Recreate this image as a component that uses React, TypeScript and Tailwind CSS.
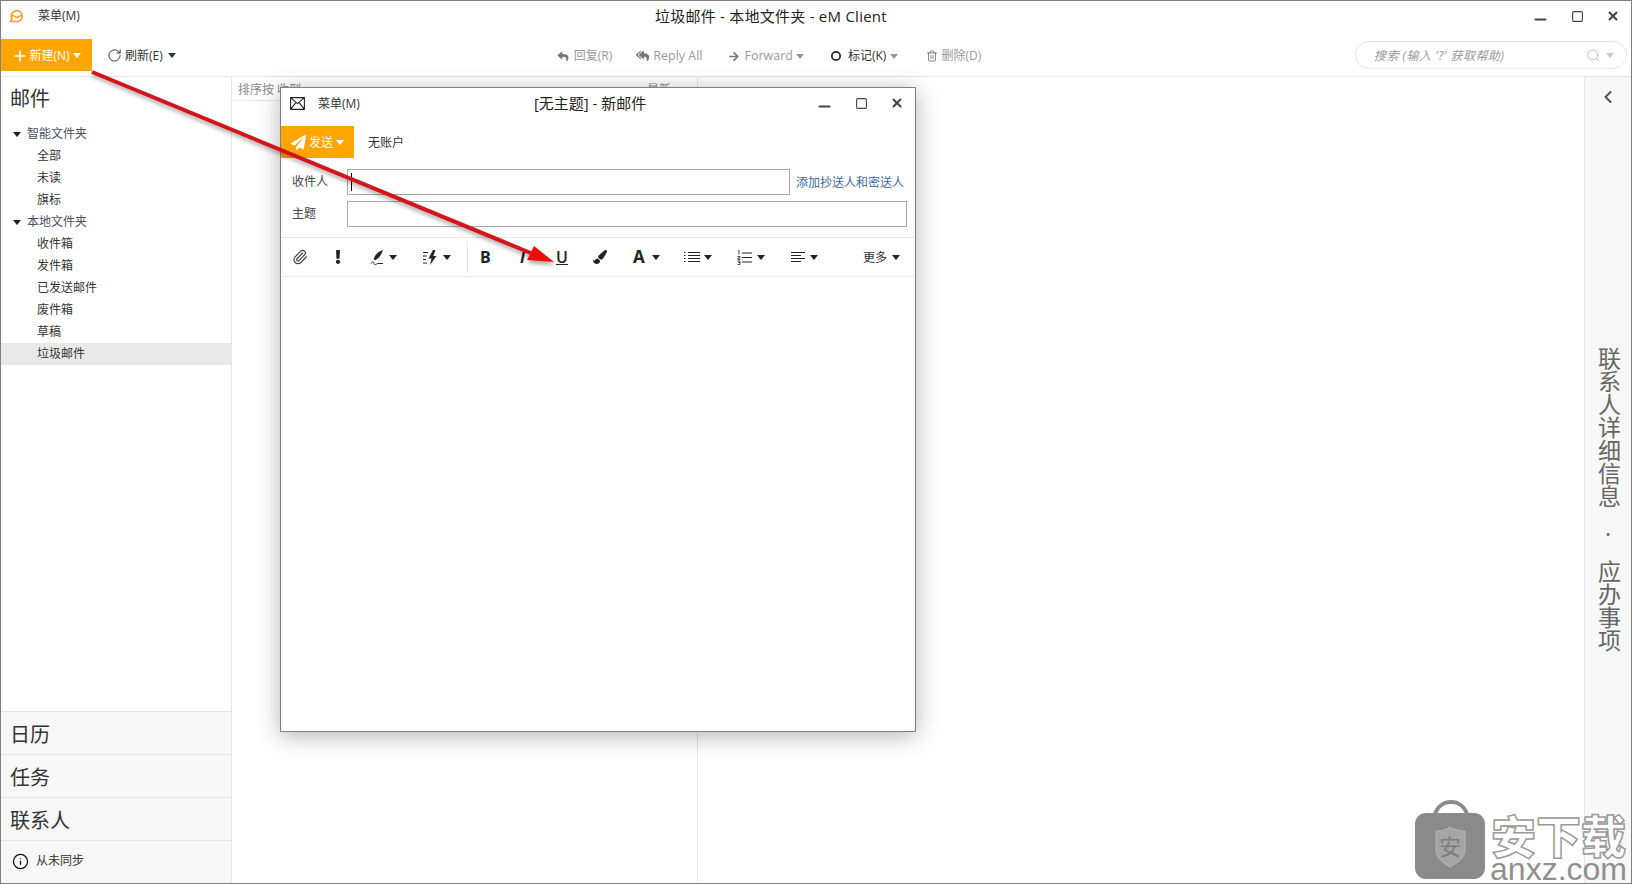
import { FaArrowRight, FaExclamation, FaPaintBrush, FaPaperPlane, FaReply, FaReplyAll } from "react-icons/fa"
import { Paperclip, Search, Trash2, ChevronLeft, Plus, RotateCw, X, Minus, Square, Info, Circle } from "lucide-react"

function Caret({ className = "text-[#222]" }: { className?: string }) {
  return (
    <svg width="8" height="5" viewBox="0 0 8 5" className={`flex-none ${className}`}>
      <path d="M0 0h8L4 5z" fill="currentColor" />
    </svg>
  )
}

function WindowButtons() {
  return (
    <div className="flex items-center gap-[22px] text-[#444]">
      <Minus className="h-[17px] w-[17px] translate-y-[3px]" strokeWidth={3} />
      <Square className="h-[13px] w-[13px]" strokeWidth={2} />
      <X className="h-[14px] w-[14px]" strokeWidth={3.5} />
    </div>
  )
}

function TreeHeader({ label }: { label: string }) {
  return (
    <div className="flex h-[22px] items-center pl-[12px] text-[#4a5260]">
      <Caret />
      <span className="ml-[6px]">{label}</span>
    </div>
  )
}

function TreeItem({ label, active }: { label: string; active?: boolean }) {
  return (
    <div className={`flex h-[22px] items-center pl-[36px] text-[#333] ${active ? "bg-[#e9e9e9]" : ""}`}>{label}</div>
  )
}

function BottomNav({ label }: { label: string }) {
  return (
    <div className="flex h-[43px] items-center border-t border-[#e6e6e6] pl-[9px] pt-[3px] text-[20px] text-[#333]">
      {label}
    </div>
  )
}

function PenIcon() {
  return (
    <svg width="14" height="16" viewBox="0 0 14 16" className="ml-[25px] flex-none">
      <path d="M13 1C9.5 2 6 4.5 4.5 8L3.5 10.5 5.5 11C8.5 9.5 11.5 6 13 1z" fill="#222" />
      <path d="M1 14.5c1.5-2 2.5-2 3 0s2 1 3.5 0H13" fill="none" stroke="#222" strokeWidth="1" />
    </svg>
  )
}

function QuickIcon() {
  return (
    <svg width="15" height="15" viewBox="0 0 15 15" className="ml-[26px] flex-none">
      <path d="M0 2.5h5M0 6h4M0 9.5h3M0 13h4" stroke="#222" strokeWidth="1" />
      <path d="M10 0L5.5 8.5h3L7 15l6.5-9h-3.2L12.5 0z" fill="#222" />
    </svg>
  )
}

function BulletIcon() {
  return (
    <svg width="16" height="12" viewBox="0 0 16 12" className="ml-[24px] flex-none">
      <path d="M4 1.5h12M4 4.5h12M4 7.5h12M4 10.5h12" stroke="#222" strokeWidth="1" />
      <path d="M0 1h1.5v1H0zM0 4h1.5v1H0zM0 7h1.5v1H0zM0 10h1.5v1H0z" fill="#222" />
    </svg>
  )
}

function NumberIcon() {
  return (
    <svg width="15" height="15" viewBox="0 0 15 15" className="ml-[25px] flex-none">
      <path d="M5 3h10M5 7.5h10M5 12h10" stroke="#222" strokeWidth="1" />
      <path d="M1 1l1-.5v4M.5 6.5h2.5v1.5H.8v1.5h2.500M.5 11h2.500v1.500H1.500M1.500 12.500H3V14.500H.5" fill="none" stroke="#222" strokeWidth="0.8" />
    </svg>
  )
}

function AlignIcon() {
  return (
    <svg width="16" height="12" viewBox="0 0 16 12" className="ml-[25px] flex-none">
      <path d="M1 1.500h14M1 4.500h10M1 7.500h14M1 10.500h10" stroke="#222" strokeWidth="1" />
    </svg>
  )
}

function ComposeWindow() {
  return (
    <div className="absolute left-[279px] top-[86px] flex h-[645px] w-[636px] flex-col border border-[#808080] bg-white text-[12px] shadow-[0_4px_22px_rgba(0,0,0,0.3)]">
      <div className="flex h-[38px] flex-none items-center pb-[8px] pl-[9px] pr-[11px]">
        <svg width="15" height="13" viewBox="0 0 15 13" className="flex-none">
          <path d="M.6.6h13.800v11.800H.6zM.6.6l6.900 6 6.900-6M.6 12.400l5.400-7M14.400 12.400l-5.400-7" fill="none" stroke="#222" strokeWidth="1.100" />
        </svg>
        <span className="ml-[13px] translate-y-px text-[#333]">菜单(M)</span>
        <span className="ml-[174px] text-[15px] text-[#222]">[无主题] - 新邮件</span>
        <div className="ml-auto">
          <WindowButtons />
        </div>
      </div>
      <div className="flex h-[32px] flex-none items-center">
        <button className="flex h-[32px] w-[73px] items-center justify-center gap-[3px] bg-[#ffa500] pt-[1px] text-white">
          <FaPaperPlane className="h-[15px] w-[15px]" />
          <span>发送</span>
          <Caret className="text-white" />
        </button>
        <span className="ml-[14px] pt-[2px] text-[#333]">无账户</span>
      </div>
      <div className="mt-[11px] flex h-[26px] flex-none items-center pl-[11px]">
        <span className="w-[55px] text-[#444]">收件人</span>
        <div className="flex h-[26px] w-[443px] items-center border border-[#a9a9a9] pl-[3px]">
          <div className="h-[18px] w-px bg-black" />
        </div>
        <a className="ml-[6px] pt-[2px] text-[#3c6a9c]">添加抄送人和密送人</a>
      </div>
      <div className="mt-[6px] flex h-[26px] flex-none items-center pl-[11px]">
        <span className="w-[55px] text-[#444]">主题</span>
        <div className="h-[26px] w-[560px] border border-[#a9a9a9]" />
      </div>
      <div className="mt-[10px] flex h-[40px] flex-none items-center border-y border-[#e6e6e6] text-[#222]">
        <Paperclip className="ml-[11px] h-[16px] w-[16px] text-[#444]" strokeWidth={1.8} />
        <FaExclamation className="ml-[23px] h-[14px] w-[14px]" />
        <PenIcon />
        <Caret className="ml-[5px]" />
        <QuickIcon />
        <Caret className="ml-[5px]" />
        <div className="ml-[16px] h-[32px] w-px bg-[#e6e6e6]" />
        <span className="ml-[12px] w-[10px] font-['Open_Sans'] text-[16px] font-bold">B</span>
        <span className="ml-[30px] w-[6px] font-['Open_Sans'] text-[16px] font-bold italic">I</span>
        <span className="ml-[30px] w-[12px] font-['Open_Sans'] text-[16px] font-semibold underline">U</span>
        <FaPaintBrush className="ml-[25px] h-[14px] w-[14px]" />
        <span className="ml-[26px] w-[12px] font-['Open_Sans'] text-[17px] font-bold">A</span>
        <Caret className="ml-[7px]" />
        <BulletIcon />
        <Caret className="ml-[4px]" />
        <NumberIcon />
        <Caret className="ml-[5px]" />
        <AlignIcon />
        <Caret className="ml-[4px]" />
        <span className="ml-[45px] pt-[1px] text-[#333]">更多</span>
        <Caret className="ml-[5px]" />
      </div>
      <div className="flex-1" />
    </div>
  )
}

function Watermark() {
  return (
    <div className="absolute left-[1414px] top-[798px] flex items-start">
      <svg width="72" height="81" viewBox="0 0 72 81">
        <path d="M19 18C22 6 30 3 36 3s14 3 17 15" fill="none" stroke="#8a8a8a" strokeWidth="4" />
        <rect x="0" y="14" width="70" height="66" rx="11" fill="#8a8a8a" />
        <path d="M21 32c7 0 11-2 14-4 3 2 8 4 15 4v19c0 8-8 13-15 17-7-4-14-9-14-17z" fill="#a5a5a5" stroke="#b5b5b5" />
        <text x="35" y="56" textAnchor="middle" fontSize="22" fill="#7d7d7d" fontFamily="'Noto Sans CJK SC', sans-serif">安</text>
      </svg>
      <div className="ml-[3px] mt-[16px] flex w-[137px] flex-col items-center">
        <span className="font-['Noto_Sans_CJK_SC',sans-serif] text-[45px] font-black leading-[40px] text-white [-webkit-text-stroke:1.5px_#9a9a9a]">安下载</span>
        <span className="font-['Liberation_Sans',sans-serif] text-[32px] leading-[28px] text-[#8f8f8f]">anxz.com</span>
      </div>
    </div>
  )
}

function Arrow() {
  return (
    <svg width="1632" height="884" className="pointer-events-none absolute -left-px -top-px">
      <defs>
        <filter id="arrowShadow" x="-10%" y="-10%" width="120%" height="130%">
          <feDropShadow dx="1" dy="3" stdDeviation="2" floodColor="#000" floodOpacity="0.35" />
        </filter>
      </defs>
      <g filter="url(#arrowShadow)">
        <path d="M92 72L533 254" stroke="#d0171a" strokeWidth="4" fill="none" />
        <path d="M534 246L527 260L554 262z" fill="#ee0f0f" />
      </g>
    </svg>
  )
}

export default function App() {
  return (
    <div className="relative flex h-[884px] w-[1632px] flex-col overflow-hidden border border-[#808080] bg-white font-['Open_Sans','Noto_Sans_CJK_SC',sans-serif] text-[12px]">
      <div className="flex h-[38px] flex-none items-center pb-[8px] pr-[11px]">
        <svg width="16" height="14" viewBox="0 0 16 14" className="ml-[7px] flex-none">
          <path d="M3 12.500h7a5.500 5.500 0 1 0-6-2.500L2.500 12.500z" fill="none" stroke="#f0a030" strokeWidth="1.600" />
          <path d="M3.500 6l5.500 2.500L14 6" fill="none" stroke="#f0a030" strokeWidth="1.400" />
        </svg>
        <span className="ml-[14px] text-[#333]">菜单(M)</span>
        <span className="ml-[575px] text-[15px] tracking-[0.25px] text-[#222]">垃圾邮件 - 本地文件夹 - eM Client</span>
        <div className="ml-auto">
          <WindowButtons />
        </div>
      </div>
      <div className="flex h-[38px] flex-none items-start border-b border-[#e6e6e6]">
        <button className="flex h-[32px] w-[91px] items-center justify-center gap-[1px] bg-[#ffa500] pt-[1px] text-white">
          <Plus className="h-[16px] w-[16px]" strokeWidth={2.6} />
          <span>新建(N)</span>
          <Caret className="ml-[2px] text-white" />
        </button>
        <div className="ml-[15px] flex h-[32px] items-center pt-[1px] text-[#333]">
          <RotateCw className="h-[15px] w-[15px]" strokeWidth={1.6} />
          <span className="ml-[3px]">刷新(E)</span>
          <Caret className="ml-[5px]" />
        </div>
        <div className="ml-[381px] flex h-[32px] items-center pt-[2px] text-[#999]">
          <FaReply className="h-[11px] w-[12px] text-[#777]" />
          <span className="ml-[5px]">回复(R)</span>
          <FaReplyAll className="ml-[23px] h-[12px] w-[15px] text-[#777]" />
          <span className="ml-[3px] text-[12.5px]">Reply All</span>
          <FaArrowRight className="ml-[25px] h-[11px] w-[12px] text-[#777]" />
          <span className="ml-[5px] text-[12.5px]">Forward</span>
          <Caret className="ml-[3px] text-[#999]" />
          <Circle className="ml-[27px] h-[10px] w-[10px] text-[#222]" strokeWidth={4} />
          <span className="ml-[7px] text-[#333]">标记(K)</span>
          <Caret className="ml-[4px]" />
          <Trash2 className="ml-[28px] h-[12px] w-[12px] text-[#777]" strokeWidth={1.8} />
          <span className="ml-[3px]">删除(D)</span>
        </div>
        <div className="ml-auto mr-[4px] mt-[2px] flex h-[28px] w-[272px] items-center rounded-full border border-[#e6e6e6] pl-[18px] pr-[12px] pt-[1px] italic tracking-[0.5px] text-[#999]">
          <span>搜索 (输入 '?' 获取帮助)</span>
          <Search className="ml-auto h-[15px] w-[15px] text-[#bbb]" strokeWidth={1.4} />
          <Caret className="ml-[5px] text-[#ccc]" />
        </div>
      </div>
      <div className="flex min-h-0 flex-1">
        <div className="flex w-[231px] flex-none flex-col border-r border-[#e6e6e6]">
          <div className="flex-1">
            <div className="flex h-[46px] items-center pb-[3px] pl-[9px] text-[20px] text-[#333]">邮件</div>
            <TreeHeader label="智能文件夹" />
            <TreeItem label="全部" />
            <TreeItem label="未读" />
            <TreeItem label="旗标" />
            <TreeHeader label="本地文件夹" />
            <TreeItem label="收件箱" />
            <TreeItem label="发件箱" />
            <TreeItem label="已发送邮件" />
            <TreeItem label="废件箱" />
            <TreeItem label="草稿" />
            <TreeItem label="垃圾邮件" active />
          </div>
          <div className="bg-[#f7f7f7]">
            <BottomNav label="日历" />
            <BottomNav label="任务" />
            <BottomNav label="联系人" />
            <div className="flex h-[43px] items-center border-t border-[#e6e6e6] pb-[2px] pl-[11px] text-[#333]">
              <Info className="h-[17px] w-[17px] text-[#111]" strokeWidth={1.8} />
              <span className="ml-[7px]">从未同步</span>
            </div>
          </div>
        </div>
        <div className="w-[466px] flex-none border-r border-[#e6e6e6]">
          <div className="flex h-[24px] items-center justify-between border-b border-[#e6e6e6] pl-[6px] pr-[26px] pt-[2px] text-[#888]">
            <span>排序按 收到</span>
            <span>最新</span>
          </div>
        </div>
        <div className="flex-1" />
        <div className="flex w-[47px] flex-none flex-col items-center border-l border-[#e6e6e6] bg-[#f7f7f7] text-[#666]">
          <ChevronLeft className="mt-[10px] h-[20px] w-[20px] text-[#555]" strokeWidth={2.5} />
          <div className="mt-[240px] flex flex-col items-center text-[23px] leading-[23px]">
            <span className="[writing-mode:vertical-rl]">联系人详细信息</span>
            <span className="my-[14px] leading-[24px]">·</span>
            <span className="[writing-mode:vertical-rl]">应办事项</span>
          </div>
        </div>
      </div>
      <ComposeWindow />
      <Watermark />
      <Arrow />
    </div>
  )
}
